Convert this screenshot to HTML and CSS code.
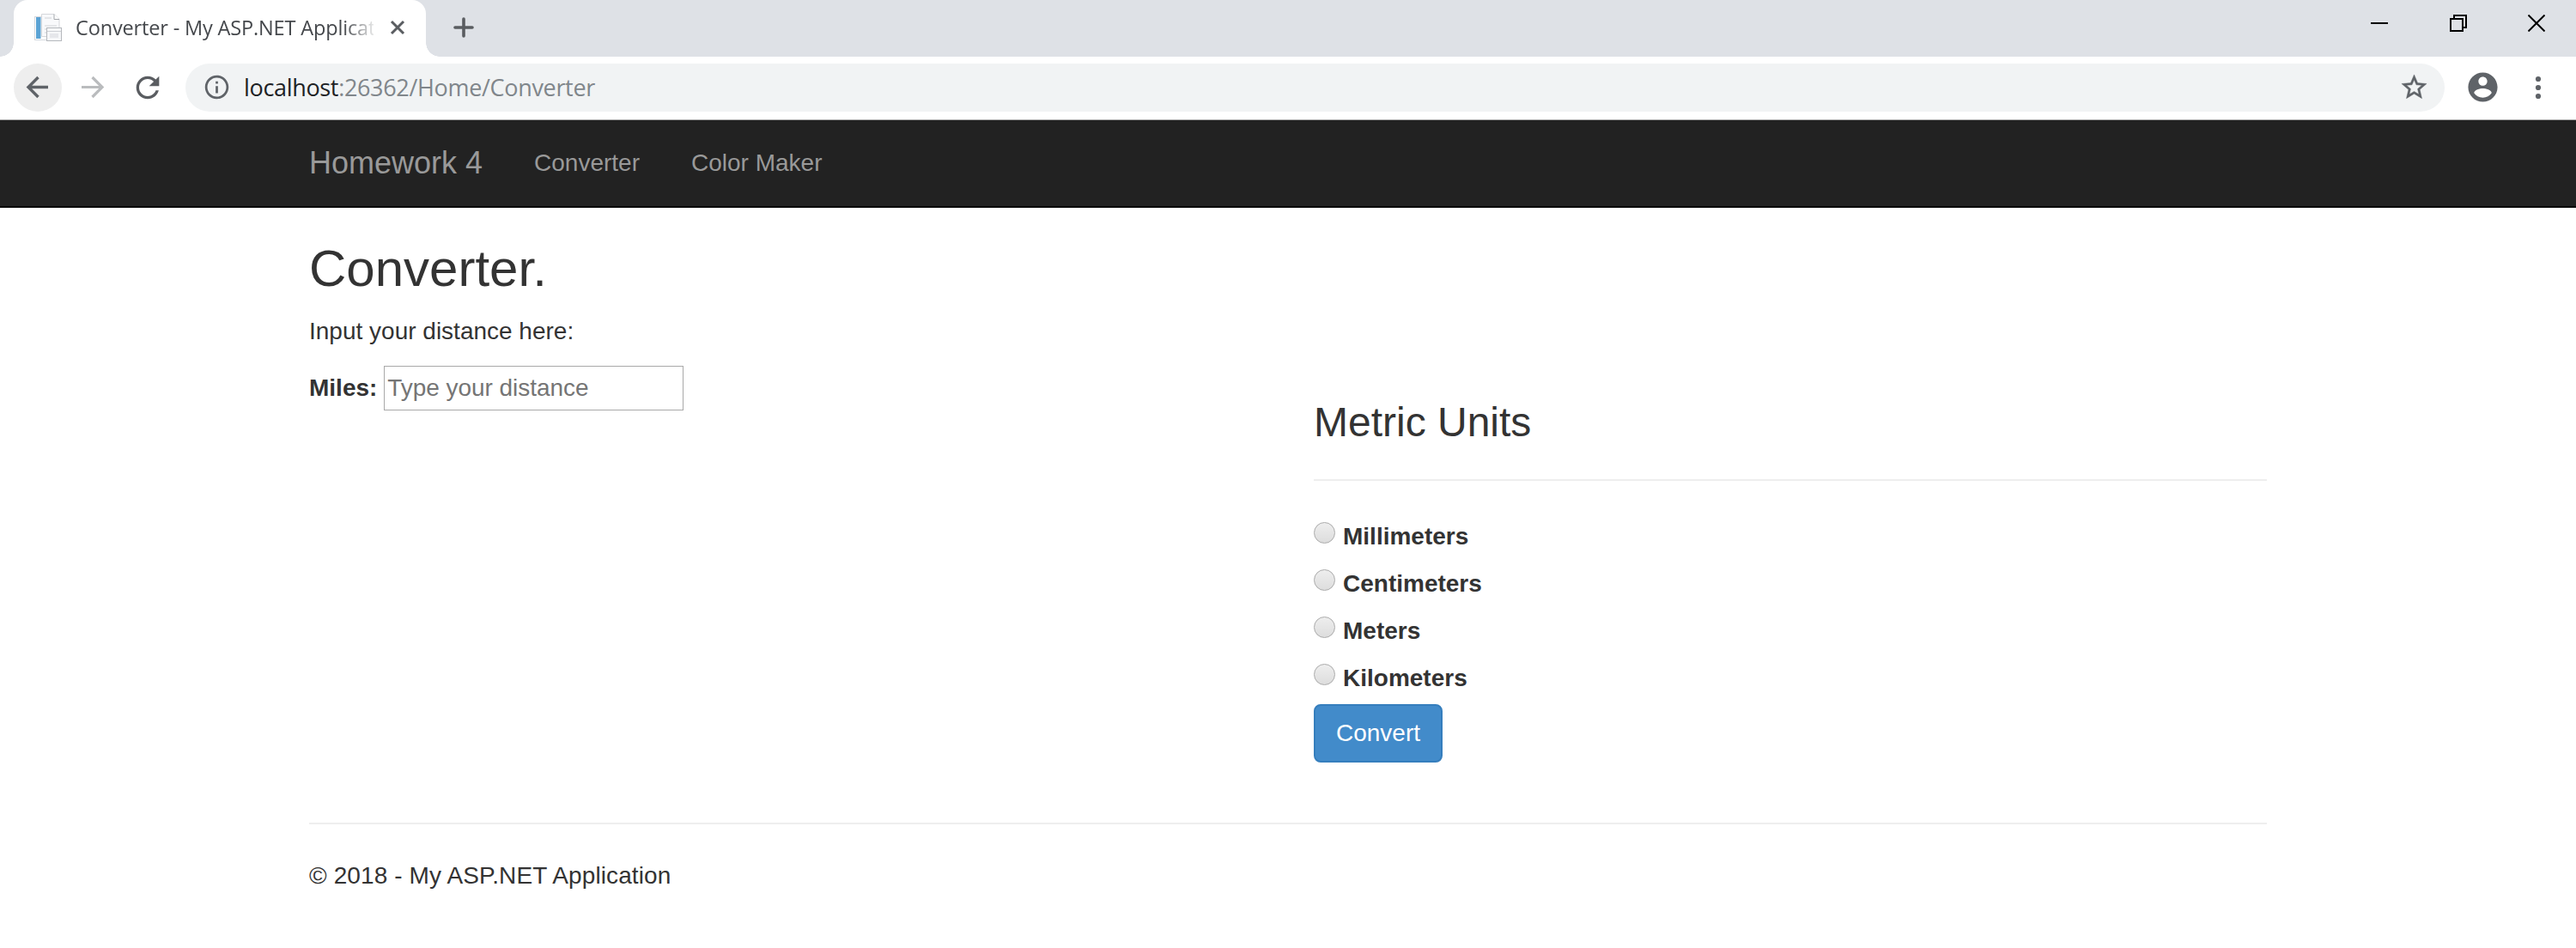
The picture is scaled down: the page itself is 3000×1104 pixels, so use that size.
FILE: index.html
```html
<!DOCTYPE html>
<html lang="en">
<head>
<meta charset="utf-8">
<title>Converter - My ASP.NET Application</title>
<link rel="stylesheet" href="styles.css">
</head>
<body>
<div class="tabstrip">
  <div class="tab">
    <svg class="favicon" width="32" height="32" viewBox="0 0 32 32">
      <rect x=".5" y="3.500" width="17" height="27" fill="#fff" stroke="#d5d8dd"/>
      <rect x="2" y="4" width="5.500" height="25" fill="#5ba3d4"/>
      <path d="M8.500.5H23l6 6V26.500H8.500z" fill="#f8f9fb" stroke="#d5d7db"/>
      <path d="M23 .5v6h6" fill="#fff" stroke="#a5a8ad"/>
      <path d="M12 5h8M12 14h14M12 18h3M12 22h3" stroke="#dddfe4" stroke-width="1.500"/>
      <rect x="14.500" y="16.500" width="17" height="15" fill="#f6f7f9" stroke="#b5b8bd"/>
      <path d="M15 20.500h16" stroke="#cfd1d6"/>
      <rect x="18" y="23" width="10" height="5" fill="#e6e7eb"/>
    </svg>
    <span class="tab-title">Converter - My ASP.NET Application</span>
    <svg class="tab-close" width="18" height="18" viewBox="0 0 18 18"><path d="M2 2l14 14M16 2L2 16" stroke="#5a5d61" stroke-width="3"/></svg>
  </div>
  <svg class="new-tab" width="24" height="24" viewBox="0 0 24 24"><path d="M12 2v20M2 12h20" stroke="#5a5d61" stroke-width="3.600" stroke-linecap="round"/></svg>
  <div class="window-controls">
    <svg width="20" height="20" viewBox="0 0 20 20"><path d="M0 10h20" stroke="#000" stroke-width="2"/></svg>
    <svg width="20" height="20" viewBox="0 0 20 20"><path d="M1 5h14v14H1zM5 5V1h14v14h-4" fill="none" stroke="#000" stroke-width="2"/></svg>
    <svg width="20" height="20" viewBox="0 0 20 20"><path d="M.5.5l19 19M19.500.5l-19 19" stroke="#000" stroke-width="2"/></svg>
  </div>
</div>
<div class="toolbar">
  <span class="nav-button active"><svg width="56" height="56" viewBox="0 0 56 56"><path d="M40 27.500H17M28.500 16L17 27.500 28.500 39" fill="none" stroke="#5f6368" stroke-width="3.400"/></svg></span>
  <span class="nav-button"><svg width="56" height="56" viewBox="0 0 56 56"><path d="M15 27.500h24M27.500 16L39 27.500 27.500 39" fill="none" stroke="#babcbe" stroke-width="3.200"/></svg></span>
  <span class="nav-button"><svg width="40" height="40" viewBox="0 0 24 24"><path fill="#5a5d61" d="M17.650 6.350C16.200 4.900 14.210 4 12 4c-4.420 0-7.990 3.580-7.990 8s3.570 8 7.990 8c3.730 0 6.840-2.550 7.730-6h-2.080c-.82 2.330-3.040 4-5.650 4-3.310 0-6-2.690-6-6s2.690-6 6-6c1.660 0 3.140.69 4.220 1.780L13 11h7V4l-2.350 2.350z"/></svg></span>
  <div class="omnibox">
    <svg width="33" height="33" viewBox="0 0 24 24"><path fill="#5f6368" d="M11 17h2v-6h-2v6zm1-15C6.480 2 2 6.480 2 12s4.480 10 10 10 10-4.480 10-10S17.520 2 12 2zm0 18c-4.410 0-8-3.590-8-8s3.590-8 8-8 8 3.590 8 8-3.590 8-8 8zM11 9h2V7h-2v2z"/></svg>
    <span class="url"><span class="host">localhost</span>:26362/Home/Converter</span>
    <svg class="star" width="35" height="35" viewBox="0 0 24 24"><path fill="#5f6368" stroke="#5f6368" stroke-width=".3" d="M22 9.240l-7.190-.62L12 2 9.190 8.630 2 9.240l5.460 4.730L5.820 21 12 17.270 18.180 21l-1.630-7.030L22 9.240zM12 15.400l-3.760 2.270 1-4.280-3.320-2.880 4.380-.38L12 6.100l1.710 4.040 4.380.38-3.320 2.880 1 4.280L12 15.400z"/></svg>
  </div>
  <svg class="account" width="41" height="41" viewBox="0 0 24 24"><path fill="#5f6368" d="M12 2C6.480 2 2 6.480 2 12s4.480 10 10 10 10-4.480 10-10S17.520 2 12 2zm0 3c1.660 0 3 1.340 3 3s-1.340 3-3 3-3-1.340-3-3 1.340-3 3-3zm0 14.200c-2.500 0-4.710-1.280-6-3.220.03-1.990 4-3.080 6-3.080 1.990 0 5.970 1.090 6 3.080-1.290 1.940-3.500 3.220-6 3.220z"/></svg>
  <svg class="menu" width="8" height="28" viewBox="0 0 8 28" fill="#5f6368"><circle cx="4" cy="4" r="3.100"/><circle cx="4" cy="14" r="3.100"/><circle cx="4" cy="24" r="3.100"/></svg>
</div>
<nav class="navbar">
  <a class="brand">Homework 4</a>
  <a class="nav-link">Converter</a>
  <a class="nav-link">Color Maker</a>
</nav>
<main class="container">
  <h2 class="page-title">Converter.</h2>
  <form class="converter">
    <div class="distance">
      <p class="hint">Input your distance here:</p>
      <div class="field">
        <label class="label" for="miles">Miles:</label>
        <input class="text-input" id="miles" type="text" placeholder="Type your distance">
      </div>
    </div>
    <div class="units">
      <h3 class="units-title">Metric Units</h3>
      <hr class="rule">
      <div class="options">
        <label class="option"><input class="radio" type="radio" name="unit">Millimeters</label>
        <label class="option"><input class="radio" type="radio" name="unit">Centimeters</label>
        <label class="option"><input class="radio" type="radio" name="unit">Meters</label>
        <label class="option"><input class="radio" type="radio" name="unit">Kilometers</label>
      </div>
      <button class="button" type="button">Convert</button>
    </div>
  </form>
  <hr class="rule">
  <footer class="footer">© 2018 - My ASP.NET Application</footer>
</main>
</body>
</html>
```
FILE: styles.css
```css
* { box-sizing: border-box; }
body {
  margin: 0;
  background: #fff;
  color: #333;
  font: 28px/40px "Liberation Sans", Arial, sans-serif;
}
svg { display: block; flex: none; }

/* Tab strip */
.tabstrip {
  display: flex;
  height: 66px;
  padding-left: 16px;
  background: #dee1e6;
}
.tab {
  position: relative;
  display: flex;
  align-items: flex-start;
  width: 480px;
  padding: 0 24px;
  border-radius: 16px 16px 0 0;
  background: #fff;
}
.tab::before, .tab::after {
  content: "";
  position: absolute;
  bottom: 0;
  width: 16px;
  height: 16px;
}
.tab::before { left: -16px; background: radial-gradient(circle at 0 0, transparent 15.500px, #fff 16px); }
.tab::after { right: -16px; background: radial-gradient(circle at 100% 0, transparent 15.500px, #fff 16px); }
.favicon { margin-top: 16px; }
.tab-title {
  width: 349px;
  margin-left: 16px;
  overflow: hidden;
  white-space: nowrap;
  font: 23.500px/64px "Open Sans", sans-serif;
  letter-spacing: -0.150px;
  color: #45484c;
  -webkit-mask-image: linear-gradient(90deg, #000 312px, transparent 352px);
  mask-image: linear-gradient(90deg, #000 312px, transparent 352px);
}
.tab-close { margin: 23px 0 0 19px; }
.new-tab { margin: 20px 0 0 32px; }
.window-controls {
  display: flex;
  gap: 71.500px;
  margin: 17px 36px 0 auto;
}

/* Toolbar */
.toolbar {
  display: flex;
  align-items: center;
  height: 74px;
  padding: 0 40px 2px 16px;
  border-bottom: 1px solid #aaa;
}
.nav-button {
  display: flex;
  align-items: center;
  justify-content: center;
  width: 56px;
  height: 56px;
  margin-right: 8px;
  border-radius: 50%;
}
.active { background: #eee; }
.omnibox {
  display: flex;
  flex: 1;
  align-items: center;
  height: 56px;
  margin-left: 8px;
  padding: 0 18px 0 20px;
  border-radius: 28px;
  background: #f1f3f4;
}
.url {
  margin-left: 15px;
  font: 27px/54px "Open Sans", sans-serif;
  letter-spacing: -0.330px;
  color: #80868b;
}
.host { color: #202124; }
.star { margin-left: auto; }
.account { margin-left: 24px; }
.menu { margin-left: 40px; }

/* Site navigation */
.navbar {
  display: flex;
  height: 102px;
  padding-left: 360px;
  border-bottom: 2px solid #080808;
  background: #222;
  color: #999;
}
.brand { margin-right: 30px; font-size: 36px; line-height: 100px; }
.nav-link { padding: 0 30px; line-height: 100px; }

/* Page */
.container { padding: 38px 360px 0; }
.page-title {
  margin: 0 0 20px;
  font-size: 60px;
  font-weight: 400;
  line-height: 66px;
}
.converter {
  display: grid;
  grid-template-columns: 1170px 1fr;
  height: 592px;
}
.hint { margin: 0 0 20px; }
.field { display: flex; align-items: center; gap: 8px; }
.label { font-weight: 700; }
.text-input {
  width: 349px;
  height: 52px;
  padding: 0 3px;
  border: 1px solid #a9a9a9;
  font: inherit;
  letter-spacing: -0.050px;
}
.text-input::placeholder { color: #757575; opacity: 1; }
.units { padding-top: 99px; }
.units-title {
  margin: 0 0 40px;
  font-size: 48px;
  font-weight: 400;
  line-height: 53px;
}
.rule { height: 2px; margin: 0; border: 0; background: #eee; }
.options { padding-top: 45px; }
.option {
  display: flex;
  align-items: flex-start;
  gap: 9px;
  height: 55px;
  font-weight: 700;
}
.radio {
  width: 25px;
  height: 25px;
  margin: 3px 0 0;
  border: 1px solid #aaa;
  border-radius: 50%;
  background: linear-gradient(#eee, #ddd);
  appearance: none;
}
.button {
  display: block;
  width: 150px;
  height: 68px;
  margin-top: -5px;
  border: 2px solid #357ebd;
  border-radius: 8px;
  background: #428bca;
  color: #fff;
  font: inherit;
}
.footer { padding-top: 40px; letter-spacing: 0.110px; }
```
